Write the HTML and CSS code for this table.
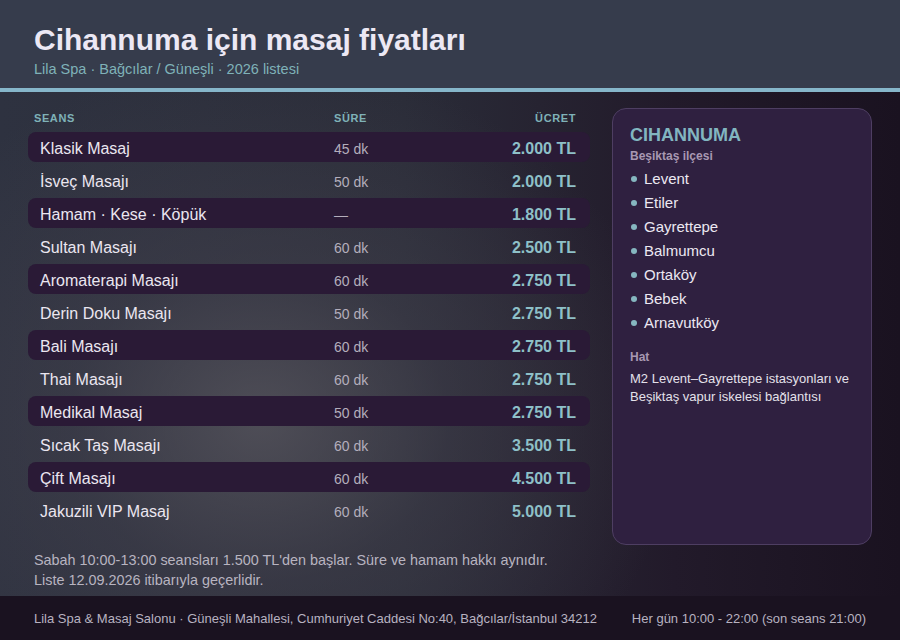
FILE: index.html
```html
<!DOCTYPE html>
<html lang="tr">
<head>
<meta charset="utf-8">
<title>Cihannuma için masaj fiyatları</title>
<link rel="stylesheet" href="styles.css">
</head>
<body>
<div class="page">
  <header class="top">
    <h1 class="title">Cihannuma için masaj fiyatları</h1>
    <div class="sub">Lila Spa · Bağcılar / Güneşli · 2026 listesi</div>
  </header>
  <main class="main">
    <section class="prices">
      <div class="row head">
        <span class="c-name">SEANS</span><span class="c-dur">SÜRE</span><span class="c-price">ÜCRET</span>
      </div>
      <div class="row alt"><span class="c-name">Klasik Masaj</span><span class="c-dur">45 dk</span><span class="c-price">2.000 TL</span></div>
      <div class="row"><span class="c-name">İsveç Masajı</span><span class="c-dur">50 dk</span><span class="c-price">2.000 TL</span></div>
      <div class="row alt"><span class="c-name">Hamam · Kese · Köpük</span><span class="c-dur">—</span><span class="c-price">1.800 TL</span></div>
      <div class="row"><span class="c-name">Sultan Masajı</span><span class="c-dur">60 dk</span><span class="c-price">2.500 TL</span></div>
      <div class="row alt"><span class="c-name">Aromaterapi Masajı</span><span class="c-dur">60 dk</span><span class="c-price">2.750 TL</span></div>
      <div class="row"><span class="c-name">Derin Doku Masajı</span><span class="c-dur">50 dk</span><span class="c-price">2.750 TL</span></div>
      <div class="row alt"><span class="c-name">Bali Masajı</span><span class="c-dur">60 dk</span><span class="c-price">2.750 TL</span></div>
      <div class="row"><span class="c-name">Thai Masajı</span><span class="c-dur">60 dk</span><span class="c-price">2.750 TL</span></div>
      <div class="row alt"><span class="c-name">Medikal Masaj</span><span class="c-dur">50 dk</span><span class="c-price">2.750 TL</span></div>
      <div class="row"><span class="c-name">Sıcak Taş Masajı</span><span class="c-dur">60 dk</span><span class="c-price">3.500 TL</span></div>
      <div class="row alt"><span class="c-name">Çift Masajı</span><span class="c-dur">60 dk</span><span class="c-price">4.500 TL</span></div>
      <div class="row"><span class="c-name">Jakuzili VIP Masaj</span><span class="c-dur">60 dk</span><span class="c-price">5.000 TL</span></div>
    </section>
    <aside class="card">
      <h2 class="card-title">CIHANNUMA</h2>
      <div class="label">Beşiktaş ilçesi</div>
      <ul class="areas">
        <li>Levent</li>
        <li>Etiler</li>
        <li>Gayrettepe</li>
        <li>Balmumcu</li>
        <li>Ortaköy</li>
        <li>Bebek</li>
        <li>Arnavutköy</li>
      </ul>
      <div class="label hat">Hat</div>
      <p class="transit">M2 Levent–Gayrettepe istasyonları ve Beşiktaş vapur iskelesi bağlantısı</p>
    </aside>
  </main>
  <div class="note">
    <p>Sabah 10:00-13:00 seansları 1.500 TL'den başlar. Süre ve hamam hakkı aynıdır.</p>
    <p>Liste 12.09.2026 itibarıyla geçerlidir.</p>
  </div>
  <footer class="foot">
    <span>Lila Spa &amp; Masaj Salonu · Güneşli Mahallesi, Cumhuriyet Caddesi No:40, Bağcılar/İstanbul 34212</span>
    <span>Her gün 10:00 - 22:00 (son seans 21:00)</span>
  </footer>
</div>
</body>
</html>
```

FILE: styles.css
```css
* { box-sizing: border-box; }
html, body { margin: 0; padding: 0; }
body {
  width: 900px;
  height: 640px;
  overflow: hidden;
  font-family: "Liberation Sans", Arial, sans-serif;
  background: #1c1422;
}
.page {
  width: 900px;
  height: 640px;
  display: flex;
  flex-direction: column;
  background:
    radial-gradient(ellipse 420px 360px at 260px 420px, rgba(90, 88, 96, 0.75) 0%, rgba(70, 68, 80, 0.45) 45%, rgba(40, 34, 48, 0) 100%),
    linear-gradient(90deg, #2e3240 0%, #2a2c38 45%, #221a2a 75%, #1a1220 100%);
}
.top {
  height: 92px;
  background: #363c4c;
  border-bottom: 4px solid #86b6ca;
  padding: 23px 34px 0;
}
.title {
  margin: 0;
  font-size: 30px;
  line-height: 34px;
  font-weight: 700;
  color: #ece8f4;
}
.sub {
  margin-top: 3px;
  font-size: 14.5px;
  line-height: 18px;
  color: #7fb2b8;
}
.main {
  display: flex;
  gap: 22px;
  padding: 16px 28px 0 28px;
  height: 454px;
}
.prices {
  width: 562px;
  display: flex;
  flex-direction: column;
  gap: 3px;
}
.row {
  display: flex;
  align-items: center;
  height: 30px;
  padding: 4px 14px 0 12px;
  border-radius: 8px;
  font-size: 16px;
  color: #ebe6f0;
}
.row.alt { background: #2a1a36; }
.row.head {
  height: 18px;
  padding: 1px 14px 0 6px;
  margin-bottom: 3px;
  font-size: 11px;
  font-weight: 700;
  letter-spacing: 0.6px;
  color: #7fb2b8;
}
.c-name { width: 294px; }
.row.head .c-name { width: 300px; }
.c-dur { width: 120px; font-size: 14px; color: #b4aebc; }
.row.head .c-dur { font-size: 11px; color: #7fb2b8; }
.c-price { flex: 1; text-align: right; font-weight: 700; color: #8ec0c8; }
.row.head .c-price { color: #7fb2b8; }
.card {
  width: 260px;
  height: 437px;
  background: #2f2040;
  border: 1px solid #4e3e62;
  border-radius: 14px;
  padding: 14px 17px;
}
.card-title {
  margin: 0;
  font-size: 18px;
  line-height: 24px;
  font-weight: 700;
  color: #82b6c0;
}
.label {
  font-size: 12px;
  line-height: 16px;
  font-weight: 700;
  color: #a898b2;
  margin-top: 1px;
}
.areas {
  list-style: none;
  margin: 2px 0 0;
  padding: 0 0 0 1px;
}
.areas li {
  display: flex;
  align-items: center;
  gap: 7px;
  height: 24px;
  font-size: 15px;
  color: #ece8f2;
}
.areas li::before {
  content: "";
  width: 6px;
  height: 6px;
  border-radius: 50%;
  background: #86b6c0;
  margin-top: 2px;
}
.label.hat { margin-top: 15px; }
.transit {
  margin: 5px 0 0;
  font-size: 13px;
  line-height: 17.5px;
  color: #e4e0ea;
}
.note {
  padding: 4px 34px 0;
  height: 50px;
}
.note p {
  margin: 0;
  font-size: 14.4px;
  line-height: 20px;
  color: #b8b4c0;
}
.foot {
  height: 44px;
  background: #1a1220;
  display: flex;
  align-items: center;
  justify-content: space-between;
  padding: 0 34px;
  font-size: 13px;
  color: #b8b2c0;
}
```
